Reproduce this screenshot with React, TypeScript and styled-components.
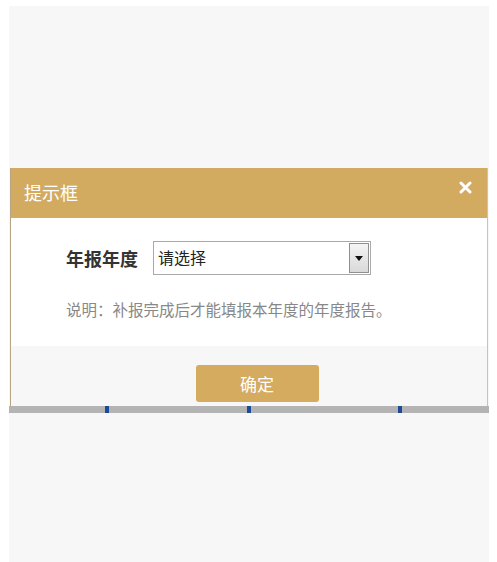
import styled, { createGlobalStyle } from "styled-components";

const GlobalStyle = createGlobalStyle`
  html, body {
    margin: 0;
    padding: 0;
    background: #ffffff;
    font-family: "Noto Sans CJK SC", "Noto Sans", sans-serif;
  }
`;

const Page = styled.div`
  margin: 6px 0 0 9px;
  width: 480px;
  height: 556px;
  background: #f7f7f7;
  padding-top: 162px;
  box-sizing: border-box;
`;

const Dialog = styled.div`
  width: 478px;
  margin-left: 1px;
  background: #ffffff;
  border-left: 1px solid #b9a582;
  border-right: 1px solid #c4c4c4;
  box-sizing: border-box;
`;

const Header = styled.div`
  height: 50px;
  background: #d2ab61;
  display: flex;
  align-items: center;
  justify-content: space-between;
  padding: 0 15px 0 13px;
`;

const Title = styled.span`
  color: #ffffff;
  font-size: 18px;
  line-height: 1;
  margin-top: -2px;
`;

const Close = styled.span`
  display: flex;
  margin-top: -12px;
`;

const Body = styled.div`
  padding: 23px 0 0 54px;
  height: 128px;
  box-sizing: border-box;
`;

const Row = styled.div`
  display: flex;
  align-items: center;
  gap: 15px;
`;

const Label = styled.span`
  font-size: 18px;
  font-weight: bold;
  color: #333333;
  margin-left: 1px;
`;

const Select = styled.div`
  width: 218px;
  height: 34px;
  border: 1px solid #a9a9a9;
  box-sizing: border-box;
  display: flex;
  align-items: center;
  justify-content: space-between;
  padding: 1px 1px 1px 4px;
`;

const SelectText = styled.span`
  font-size: 16px;
  color: #222222;
  margin-top: -3px;
`;

const Arrow = styled.span`
  width: 20px;
  height: 30px;
  box-sizing: border-box;
  border: 1px solid #8f8f8f;
  background: linear-gradient(#f4f4f4, #d9d9d9);
  display: flex;
  align-items: center;
  justify-content: center;
`;

const Note = styled.p`
  margin: 24px 0 0 1px;
  font-size: 15.5px;
  color: #888888;
  line-height: 20px;
`;

const Footer = styled.div`
  height: 60px;
  background: #f7f7f7;
  display: flex;
  justify-content: center;
  align-items: flex-start;
  padding-top: 19px;
  box-sizing: border-box;
`;

const Button = styled.button`
  width: 123px;
  height: 37px;
  margin-left: 16px;
  border: none;
  border-radius: 3px;
  background: #d4ab5f;
  color: #ffffff;
  font-family: inherit;
  font-size: 17px;
  padding: 0;
`;

const ShadowBar = styled.div`
  height: 7px;
  width: 480px;
  background: #b4b4b4;
  display: flex;
`;

const Tick = styled.span<{ $left: number }>`
  width: 4px;
  height: 7px;
  background: #1b4b96;
  margin-left: ${(p) => p.$left}px;
`;

export default function App() {
  return (
    <>
      <GlobalStyle />
      <Page>
        <Dialog>
          <Header>
            <Title>提示框</Title>
            <Close>
              <svg width="13" height="13" viewBox="0 0 13 13">
                <path
                  d="M2 2 L11 11 M11 2 L2 11"
                  stroke="#ffffff"
                  strokeWidth="3"
                  strokeLinecap="round"
                />
              </svg>
            </Close>
          </Header>
          <Body>
            <Row>
              <Label>年报年度</Label>
              <Select>
                <SelectText>请选择</SelectText>
                <Arrow>
                  <svg width="8" height="5" viewBox="0 0 8 5">
                    <path d="M0 0 L8 0 L4 5 Z" fill="#111111" />
                  </svg>
                </Arrow>
              </Select>
            </Row>
            <Note>说明：补报完成后才能填报本年度的年度报告。</Note>
          </Body>
          <Footer>
            <Button>确定</Button>
          </Footer>
        </Dialog>
        <ShadowBar>
          <Tick $left={96} />
          <Tick $left={138} />
          <Tick $left={147} />
        </ShadowBar>
      </Page>
    </>
  );
}
